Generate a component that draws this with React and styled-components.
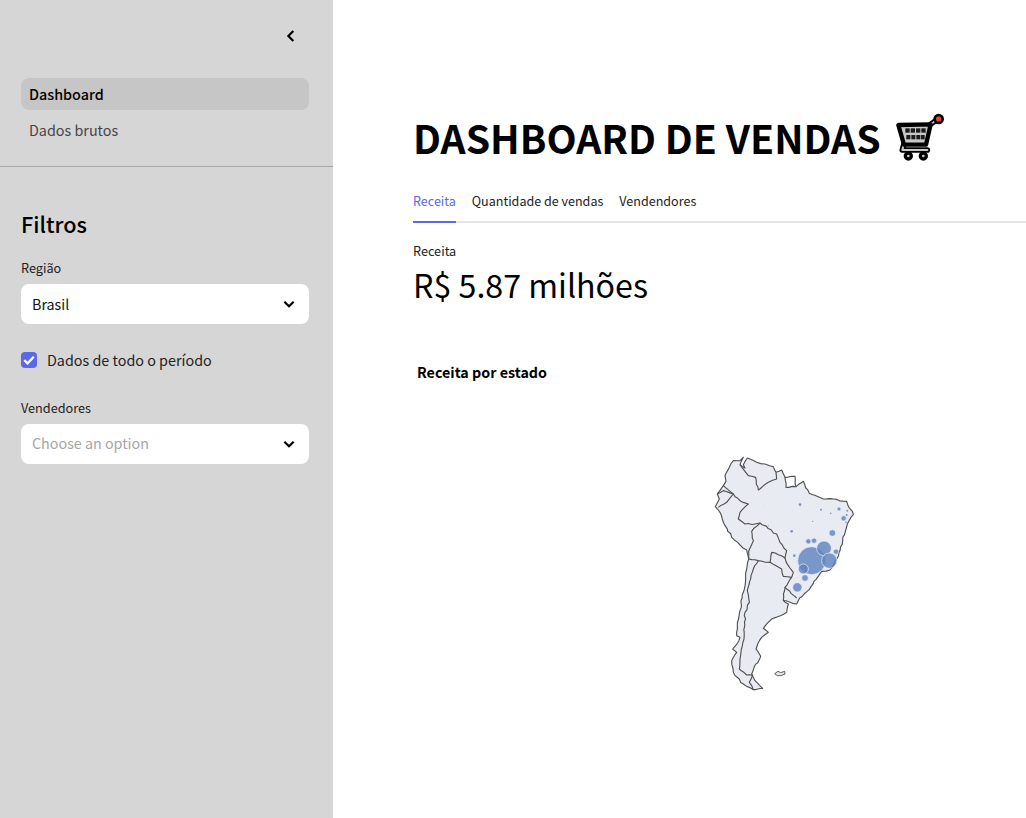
import React from "react";
import styled, { createGlobalStyle } from "styled-components";

const GlobalStyle = createGlobalStyle`
  html, body {
    margin: 0;
    padding: 0;
    height: 100%;
    overflow: hidden;
    background: #fff;
    color: #000;
    font-family: "Noto Sans CJK SC", "Noto Sans", sans-serif;
  }
  * { box-sizing: border-box; }
`;

const CIRCLES = [
  [220, 180, 1], [330, 182, 4], [393, 197, 3], [422, 208, 2.5], [447, 195, 6],
  [472, 200, 3], [470, 213, 3], [461, 223, 8], [468, 235, 2.5], [427, 267, 10],
  [368, 232, 2], [305, 262, 4], [235, 245, 1.5], [355, 292, 8], [372, 290, 8],
  [313, 335, 4], [365, 350, 42], [402, 313, 22], [438, 323, 8], [418, 350, 23],
  [340, 375, 15], [345, 402, 10], [322, 430, 14],
];

// outlines traced from the picture, in units of a third of a pixel
const COAST = [
  [160, 40], [150, 50], [130, 50], [118, 70], [105, 95], [108, 112], [100, 125], [82, 150],
  [88, 165], [76, 188], [90, 205], [100, 235], [125, 280], [150, 303], [170, 318], [176, 345],
  [170, 375], [165, 425], [160, 445], [150, 500], [142, 545], [140, 575], [150, 580], [128, 615],
  [140, 625], [125, 650], [130, 685], [160, 720], [190, 737], [218, 733], [195, 710], [185, 690],
  [212, 637], [198, 615], [215, 580], [235, 565], [220, 553], [245, 525], [290, 505], [295, 480],
  [280, 470], [320, 480], [329, 462], [358, 436], [372, 412], [395, 382], [420, 378], [440, 345],
  [458, 290], [472, 240], [490, 212], [470, 172], [430, 165], [400, 165], [358, 148], [340, 112],
  [318, 128], [288, 130], [285, 100], [275, 78], [258, 85], [250, 68], [225, 60], [200, 55],
  [172, 42], [160, 62], [165, 72], [150, 62],
];

const BORDERS = [
  [[150, 62], [165, 82], [175, 95], [197, 100], [205, 138], [235, 115], [260, 105], [258, 85]],
  [[100, 125], [130, 150], [150, 170], [175, 180], [150, 205], [145, 225], [165, 240], [195, 240],
    [210, 237], [260, 270], [270, 295], [290, 320], [285, 342], [300, 372], [310, 385], [305, 400],
    [285, 430], [320, 462]],
  [[82, 150], [100, 140], [130, 150], [110, 175], [85, 190]],
  [[210, 237], [185, 262], [190, 290], [176, 322], [176, 345]],
  [[176, 345], [205, 350], [240, 355], [245, 325], [285, 342]],
  [[205, 350], [190, 375], [172, 440], [178, 475], [165, 505], [162, 585], [150, 645], [148, 675],
    [170, 693], [188, 693], [178, 715], [190, 737]],
  [[240, 355], [275, 375], [280, 397], [305, 400]],
  [[285, 430], [280, 470]],
  [[285, 100], [315, 97], [318, 128]],
];

// breaks each straight run into small steps, so the border wobbles like low-res map data
const toPath = (points, closed) => {
  let seed = 7;
  const next = () => {
    seed = (seed * 9301 + 49297) % 233280;
    return seed / 233280 - 0.5;
  };
  const out = [];
  points.forEach(([x, y], i) => {
    const last = i === points.length - 1;
    if (last && !closed) {
      out.push([x, y]);
      return;
    }
    const [nx, ny] = points[(i + 1) % points.length];
    out.push([x, y]);
    const len = Math.hypot(nx - x, ny - y);
    const steps = Math.floor(len / 9);
    for (let s = 1; s < steps; s++) {
      const t = s / steps;
      const amp = Math.min(len * 0.12, 5);
      out.push([x + (nx - x) * t + next() * amp, y + (ny - y) * t + next() * amp]);
    }
  });
  const d = out.map(([x, y], i) => `${i ? "L" : "M"}${x.toFixed(1)} ${y.toFixed(1)}`).join(" ");
  return closed ? `${d} Z` : d;
};

const ChevronLeft = () => (
  <svg width="16" height="16" viewBox="0 0 24 24" fill="none" stroke="#000" strokeWidth="3.2">
    <path d="M15.5 4.5 L8 12 L15.5 19.5" />
  </svg>
);

const ChevronDown = () => (
  <svg width="16" height="16" viewBox="0 0 24 24" fill="none" stroke="#000" strokeWidth="3.2">
    <path d="M5 8.5 L12 15.5 L19 8.5" />
  </svg>
);

const Check = () => (
  <svg width="16" height="16" viewBox="0 0 16 16" fill="none" stroke="#fff" strokeWidth="2.4">
    <path d="M3.2 8.2 L6.6 11.4 L12.8 4.8" />
  </svg>
);

const CART_HOLES = [
  [106, 88, 13, 13], [122, 88, 13, 13], [138, 88, 13, 13], [154, 88, 13, 13],
  [109, 108, 12, 13], [124, 108, 12, 13], [139, 108, 12, 13], [153, 108, 11, 13],
];

const CartIcon = () => (
  <svg width="51" height="50" viewBox="75 39 153 150">
    <g fill="none" strokeLinejoin="round" strokeLinecap="round">
      <path d="M102 135 L97 153 L172 153" stroke="#000" strokeWidth="17" />
      <path d="M102 135 L97 153 L172 153" stroke="#c9c9c9" strokeWidth="6" />
      <path d="M176 80 L204 60" stroke="#000" strokeWidth="16" />
      <path d="M176 80 L204 60" stroke="#c9c9c9" strokeWidth="5" />
      <path d="M85 78 L182 76 L168 137 L102 137 Z" fill="#c9c9c9" stroke="#000" strokeWidth="13" />
      <circle cx="115" cy="171" r="9" fill="#c9c9c9" stroke="#000" strokeWidth="10" />
      <circle cx="160" cy="171" r="9" fill="#c9c9c9" stroke="#000" strokeWidth="10" />
    </g>
    {CART_HOLES.map(([x, y, w, h]) => (
      <rect key={`${x}-${y}`} x={x} y={y} width={w} height={h} fill="#1c1c1c" />
    ))}
    <circle cx="206" cy="60" r="12" fill="#e8452a" stroke="#000" strokeWidth="8" />
  </svg>
);

const SouthAmerica = () => (
  <MapSvg viewBox="0 0 540 765">
    <path d={toPath(COAST, true)} fill="#e9ebf3" stroke="#505050" strokeWidth="3.4" strokeLinejoin="round" />
    {BORDERS.map((points) => (
      <path
        key={points.join()}
        d={toPath(points, false)}
        fill="none"
        stroke="#505050"
        strokeWidth="3.4"
        strokeLinejoin="round"
      />
    ))}
    <path
      d="M254 689 L264 682 L272 686 L284 682 L285 690 L272 695 L262 695 Z"
      fill="#e9ebf3"
      stroke="#505050"
      strokeWidth="2.8"
    />
    {CIRCLES.map(([cx, cy, r]) => (
      <circle
        key={`${cx}-${cy}`}
        cx={cx}
        cy={cy}
        r={r}
        fill="rgba(96,132,192,0.82)"
        stroke="#eef0f7"
        strokeWidth={r > 5 ? 2 : 0}
      />
    ))}
  </MapSvg>
);

export default function App() {
  return (
    <React.Fragment>
      <GlobalStyle />
      <Page>
        <Sidebar>
          <CollapseRow>
            <ChevronLeft />
          </CollapseRow>
          <Nav>
            <NavItem $active>Dashboard</NavItem>
            <NavItem>Dados brutos</NavItem>
          </Nav>
          <Divider />
          <Filters>
            <FiltersTitle>Filtros</FiltersTitle>
            <Label>Região</Label>
            <Select>
              <span>Brasil</span>
              <ChevronDown />
            </Select>
            <CheckRow>
              <CheckBox>
                <Check />
              </CheckBox>
              <span>Dados de todo o período</span>
            </CheckRow>
            <Label>Vendedores</Label>
            <Select $placeholder>
              <span>Choose an option</span>
              <ChevronDown />
            </Select>
          </Filters>
        </Sidebar>
        <Main>
          <Title>
            DASHBOARD DE VENDAS
            <CartIcon />
          </Title>
          <Tabs>
            <Tab $active>Receita</Tab>
            <Tab>Quantidade de vendas</Tab>
            <Tab>Vendendores</Tab>
          </Tabs>
          <MetricLabel>Receita</MetricLabel>
          <MetricValue>R$ 5.87 milhões</MetricValue>
          <ChartTitle>Receita por estado</ChartTitle>
          <SouthAmerica />
        </Main>
      </Page>
    </React.Fragment>
  );
}

const Page = styled.div`
  display: flex;
  width: 100%;
  height: 100vh;
  overflow: hidden;
`;

const Sidebar = styled.aside`
  flex: 0 0 333px;
  background: #d6d6d6;
`;

const CollapseRow = styled.div`
  display: flex;
  justify-content: flex-end;
  height: 78px;
  padding: 28px 34px 0 0;
`;

const Nav = styled.nav`
  display: flex;
  flex-direction: column;
  gap: 4px;
  padding: 0 24px 0 21px;
`;

const NavItem = styled.div`
  height: 32px;
  padding-left: 8px;
  border-radius: 8px;
  font-size: 14.35px;
  line-height: 31px;
  font-weight: ${(p) => (p.$active ? 500 : 400)};
  color: ${(p) => (p.$active ? "#000" : "#444")};
  background: ${(p) => (p.$active ? "#c6c6c6" : "transparent")};
`;

const Divider = styled.hr`
  margin: 20px 0 0;
  border: 0;
  border-top: 1px solid #a8a8a8;
`;

const Filters = styled.section`
  padding: 41px 24px 0 21px;
`;

const FiltersTitle = styled.h2`
  margin: 0 0 19px;
  font-size: 21.7px;
  line-height: 32px;
  font-weight: 500;
`;

const Label = styled.div`
  margin-bottom: 7px;
  font-size: 12.7px;
  line-height: 18px;
  color: #222;
`;

const Select = styled.div`
  display: flex;
  align-items: center;
  justify-content: space-between;
  height: 40px;
  padding: 0 12px 0 11px;
  background: #fff;
  border-radius: 8px;
  font-size: 14.3px;
  color: ${(p) => (p.$placeholder ? "#a5a5a8" : "#111")};

  span {
    margin-top: ${(p) => (p.$placeholder ? -4 : -2)}px;
  }
`;

const CheckRow = styled.div`
  display: flex;
  align-items: center;
  gap: 10px;
  height: 24px;
  margin: 24px 0 27px;
  font-size: 14.35px;
  color: #222;

  span:last-child {
    margin-top: -2px;
  }
`;

const CheckBox = styled.span`
  display: flex;
  align-items: center;
  justify-content: center;
  width: 16px;
  height: 16px;
  border-radius: 4px;
  background: #5b68e8;
`;

const Main = styled.main`
  flex: 1;
  min-width: 0;
  padding: 111px 0 0 80px;
`;

const Title = styled.h1`
  display: flex;
  align-items: center;
  gap: 14px;
  margin: 0;
  height: 52px;
  font-size: 39.2px;
  line-height: 52px;
  font-weight: 700;
  color: #000;
`;

const Tabs = styled.div`
  display: flex;
  gap: 16px;
  margin-top: 22px;
  border-bottom: 2px solid #e4e4e6;
`;

const Tab = styled.div`
  height: 38px;
  margin-bottom: -2px;
  font-size: 12.55px;
  line-height: 32px;
  color: ${(p) => (p.$active ? "#5b68e8" : "#222")};
  border-bottom: 2px solid ${(p) => (p.$active ? "#5b68e8" : "transparent")};
`;

const MetricLabel = styled.div`
  margin-top: 19px;
  font-size: 12.7px;
  line-height: 18px;
  color: #222;
`;

const MetricValue = styled.div`
  font-size: 32.2px;
  line-height: 48px;
  color: #000;
`;

const ChartTitle = styled.div`
  margin: 52px 0 0 4px;
  font-size: 14.3px;
  line-height: 24px;
  font-weight: 700;
`;

const MapSvg = styled.svg`
  display: block;
  width: 180px;
  height: 255px;
  margin: 60px 0 0 277px;
`;
